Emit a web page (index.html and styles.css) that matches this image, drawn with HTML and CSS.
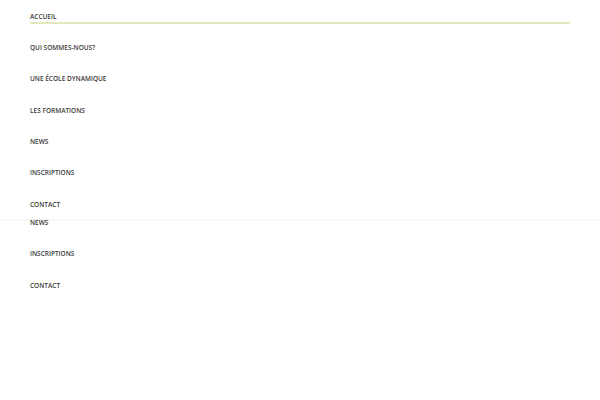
FILE: index.html
```html
<!DOCTYPE html>
<html lang="fr">
<head>
    <meta charset="UTF-8">
    <meta name="viewport" content="width=device-width, initial-scale=1.0">
    <title>Accueil</title>
    <link rel="stylesheet" href="styles.css">
</head>
<body>
    <nav class="mobile-menu">
        <ul class="menu-list">
            <li><a href="#" class="active">Accueil</a></li>
            <li><a href="#">Qui sommes-nous?</a></li>
            <li><a href="#">Une école dynamique</a></li>
            <li><a href="#">Les formations</a></li>
            <li><a href="#">News</a></li>
            <li><a href="#">Inscriptions</a></li>
            <li><a href="#">Contact</a></li>
        </ul>
    </nav>

    <ul class="menu-list page-list">
        <li><a href="#">Accueil</a></li>
        <li><a href="#">Qui sommes-nous?</a></li>
        <li><a href="#">Une école dynamique</a></li>
        <li><a href="#">Les formations</a></li>
        <li><a href="#">News</a></li>
        <li><a href="#">Inscriptions</a></li>
        <li><a href="#">Contact</a></li>
    </ul>
</body>
</html>
```

FILE: styles.css
```css
body {
    font-family: "Open Sans", "Liberation Sans", sans-serif;
    background-color: #fff;
    margin: 0;
}

.mobile-menu {
    position: absolute;
    top: 0;
    left: 0;
    right: 0;
    height: 219px;
    background-color: #fff;
    box-shadow: 0 1px 3px rgba(0, 0, 0, 0.06);
    z-index: 2;
}

.menu-list {
    list-style: none;
    margin: 0;
    padding: 10.5px 30px 0;
}

.menu-list li {
    margin-bottom: 18.4px;
}

.menu-list a {
    display: block;
    color: #3a3a3a;
    text-decoration: none;
    text-transform: uppercase;
    font-size: 6.5px;
    font-weight: 600;
    line-height: 11px;
    border-bottom: 2px solid transparent;
}

.menu-list a.active {
    border-bottom-color: #e3e9bd;
}

.page-list {
    padding-top: 91.5px;
}
```
